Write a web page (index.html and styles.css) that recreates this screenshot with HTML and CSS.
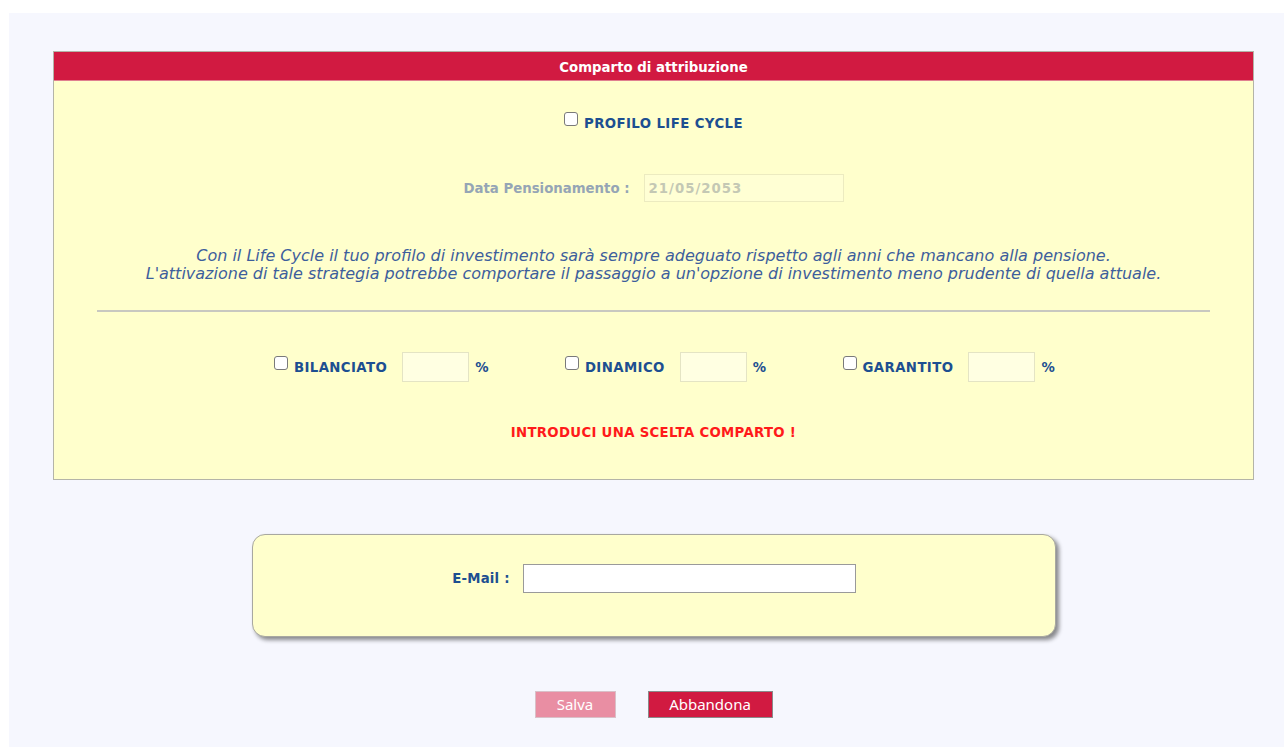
FILE: index.html
```html
<!DOCTYPE html>
<html lang="it">
<head>
<meta charset="utf-8">
<title>Comparto di attribuzione</title>
<link rel="stylesheet" href="styles.css">
</head>
<body>
<div class="page">
  <section class="panel">
    <div class="panel-head">Comparto di attribuzione</div>
    <div class="panel-body">
      <div class="row row-life">
        <label class="check"><input type="checkbox" class="box"><span class="lbl">PROFILO LIFE CYCLE</span></label>
      </div>
      <div class="row row-date">
        <span class="muted">Data Pensionamento :</span>
        <input type="text" class="date-input" value="21/05/2053" disabled>
      </div>
      <p class="note">Con il Life Cycle il tuo profilo di investimento sarà sempre adeguato rispetto agli anni che mancano alla pensione.<br>L'attivazione di tale strategia potrebbe comportare il passaggio a un'opzione di investimento meno prudente di quella attuale.</p>
      <hr class="sep">
      <div class="row row-funds">
        <div class="fund">
          <label class="check"><input type="checkbox" class="box"><span class="lbl">BILANCIATO</span></label>
          <input type="text" class="pct-input">
          <span class="lbl pct">%</span>
        </div>
        <div class="fund">
          <label class="check"><input type="checkbox" class="box"><span class="lbl">DINAMICO</span></label>
          <input type="text" class="pct-input">
          <span class="lbl pct">%</span>
        </div>
        <div class="fund">
          <label class="check"><input type="checkbox" class="box"><span class="lbl">GARANTITO</span></label>
          <input type="text" class="pct-input">
          <span class="lbl pct">%</span>
        </div>
      </div>
      <div class="error">INTRODUCI UNA SCELTA COMPARTO !</div>
    </div>
  </section>

  <section class="mail-card">
    <span class="lbl mail-lbl">E-Mail :</span>
    <input type="text" class="mail-input">
  </section>

  <div class="actions">
    <button class="btn btn-off" type="button">Salva</button>
    <button class="btn btn-main" type="button">Abbandona</button>
  </div>
</div>
</body>
</html>
```

FILE: styles.css
```css
html, body {
  margin: 0;
  padding: 0;
  background: #ffffff;
}

body {
  font-family: "DejaVu Sans", Verdana, sans-serif;
  font-size: 13.3px;
}

.page {
  margin: 13px 0 0 9px;
  height: 734px;
  background: #f6f7fe;
  padding-top: 38px;
  box-sizing: border-box;
}

/* main yellow panel with red title strip */
.panel {
  margin-left: 44px;
  width: 1201px;
  border: 1px solid #b4b4a8;
  box-sizing: border-box;
  background: #ffffcc;
}

.panel-head {
  height: 29px;
  line-height: 24px;
  padding-top: 4px;
  box-sizing: border-box;
  background: #d11a41;
  color: #ffffff;
  font-weight: bold;
  text-align: center;
  border-bottom: 1px solid #e08090;
}

.panel-body {
  padding-bottom: 35px;
}

.row {
  display: flex;
  align-items: center;
  justify-content: center;
}

.row-life { height: 84px; }
.row-date { height: 46px; gap: 14px; }

.check {
  display: inline-flex;
  align-items: center;
  gap: 6px;
}

.box {
  appearance: none;
  -webkit-appearance: none;
  margin: 0;
  width: 14px;
  height: 14px;
  border: 1.5px solid #7a7a7a;
  border-radius: 3px;
  background: #ffffff;
  box-sizing: border-box;
  position: relative;
  top: -4px;
}

.lbl {
  color: #1d4f91;
  font-weight: bold;
  font-size: 13.3px;
  letter-spacing: 0.4px;
}

.muted {
  color: #95a5b5;
  font-weight: bold;
}

.date-input {
  width: 200px;
  height: 28px;
  box-sizing: border-box;
  border: 1px solid #ecebc0;
  background: #ffffd4;
  color: #c4c8b4;
  font-family: inherit;
  font-weight: bold;
  font-size: 13.3px;
  letter-spacing: 1px;
  padding: 0 4px;
  margin: 0;
}

.note {
  margin: 36px 0 0;
  text-align: center;
  font-style: italic;
  font-size: 16px;
  line-height: 18px;
  color: #3d5e9c;
}

.sep {
  margin: 27px 43px 0;
  border: 0;
  height: 2px;
  background: #c8c8c0;
}

.row-funds {
  height: 110px;
  gap: 76px;
  padding-left: 22px;
}

.fund {
  display: flex;
  align-items: center;
}

.pct-input {
  width: 67px;
  height: 30px;
  box-sizing: border-box;
  border: 1px solid #e4e4c4;
  background: #ffffe2;
  margin: 0 6px 0 15px;
  padding: 0;
}

.error {
  height: 22px;
  line-height: 22px;
  text-align: center;
  color: #ff1a1a;
  font-weight: bold;
  letter-spacing: 0.3px;
}

/* rounded e-mail card */
.mail-card {
  margin: 54px 0 0 243px;
  width: 804px;
  height: 103px;
  box-sizing: border-box;
  background: #ffffcc;
  border: 1px solid #a8a8a0;
  border-radius: 13px;
  box-shadow: 3px 3px 4px rgba(0, 0, 0, 0.45);
  display: flex;
  align-items: center;
  justify-content: center;
  gap: 13px;
  padding-bottom: 14px;
}

.mail-lbl {
  letter-spacing: 0.2px;
}

.mail-input {
  width: 333px;
  height: 29px;
  box-sizing: border-box;
  border: 1px solid #9a9a9a;
  background: #ffffff;
  margin: 0;
}

.actions {
  margin: 54px 0 0 44px;
  width: 1201px;
  display: flex;
  justify-content: center;
  gap: 32px;
}

.btn {
  height: 27px;
  box-sizing: border-box;
  font-family: "Noto Sans", "Open Sans", sans-serif;
  font-size: 15px;
  color: #ffffff;
  padding: 0;
  margin: 0;
  line-height: 25px;
}

.btn-off {
  width: 81px;
  background: #e98ea3;
  border: 1px solid #d9c0c8;
}

.btn-main {
  width: 125px;
  background: #d11a41;
  border: 1px solid #8a8a8a;
}
```
